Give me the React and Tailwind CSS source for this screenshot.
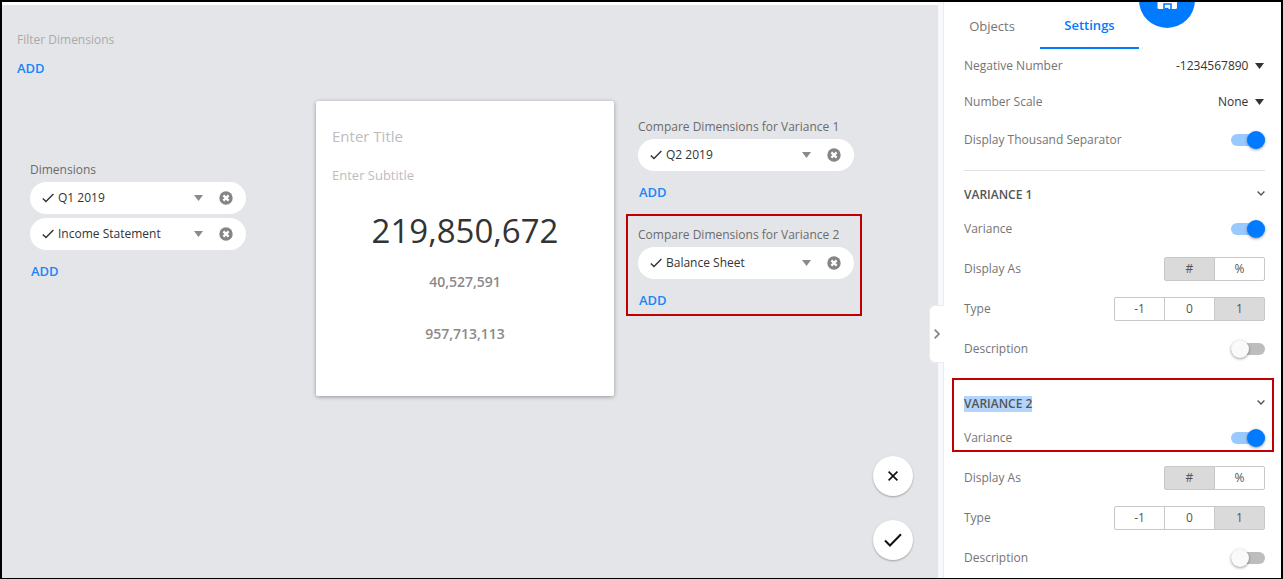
import { useState } from 'react';

const Triangle = ({ className }) => (
  <svg viewBox="0 0 10 6" preserveAspectRatio="none" className={className} fill="currentColor" aria-hidden="true">
    <path d="M0 0h10L5 6z" />
  </svg>
);

const Check = ({ className }) => (
  <svg viewBox="0 0 12 10" className={className} fill="none" stroke="currentColor" strokeWidth="1.4" aria-hidden="true">
    <path d="M.8 5.4 4 8.6 11.4 1" />
  </svg>
);

const Chevron = ({ className }) => (
  <svg viewBox="0 0 8 5" className={className} fill="none" stroke="currentColor" strokeWidth="1.4" aria-hidden="true">
    <path d="M.6.6 4 3.9 7.4.6" />
  </svg>
);

function Chip({ value }) {
  return (
    <div className="flex h-8 items-center rounded-full bg-white pr-[13px] pl-3 text-[#333]">
      <Check className="mr-1 h-[10px] w-3 shrink-0" />
      <div className="relative flex min-w-0 flex-1 items-center">
        <select aria-label={value} className="w-full appearance-none bg-transparent pr-4 outline-none">
          <option>{value}</option>
        </select>
        <Triangle className="pointer-events-none absolute right-0 h-[6px] w-[9px] text-[#8a8a8a]" />
      </div>
      <button type="button" aria-label={`Remove ${value}`} className="ml-4 shrink-0">
        <svg viewBox="0 0 14 14" className="size-[14px]" aria-hidden="true">
          <circle cx="7" cy="7" r="6.7" fill="#858585" />
          <path d="M4.4 4.4l5.2 5.2M9.6 4.4 4.4 9.6" stroke="#fff" strokeWidth="2.2" />
        </svg>
      </button>
    </div>
  );
}

function Dimensions({ label, values }) {
  return (
    <div className="w-[216px]">
      <div className="h-6 leading-6 text-[#6b6b6b]">{label}</div>
      <div className="flex flex-col gap-1">
        {values.map((v) => (
          <Chip key={v} value={v} />
        ))}
      </div>
      <button type="button" className="mt-[11px] block h-5 pl-px text-[13px] leading-5 font-semibold text-[#1a85f8]">
        ADD
      </button>
    </div>
  );
}

function SelectRow({ id, label, value }) {
  return (
    <div className="flex h-9 items-center justify-between">
      <label htmlFor={id}>{label}</label>
      <div className="flex items-center gap-[6px] pr-px text-[#333]">
        <select id={id} className="appearance-none bg-transparent outline-none">
          <option>{value}</option>
        </select>
        <Triangle className="h-[6px] w-[9px]" />
      </div>
    </div>
  );
}

function ToggleRow({ id, label, initial }) {
  const [on, setOn] = useState(initial);
  return (
    <div className="flex h-10 items-center justify-between">
      <label htmlFor={id}>{label}</label>
      <input
        id={id}
        type="checkbox"
        checked={on}
        onChange={() => setOn(!on)}
        className="flex h-3 w-[34px] appearance-none items-center rounded-full bg-[#bdbdbd] before:size-[18px] before:shrink-0 before:rounded-full before:bg-[#fafafa] before:shadow-[0_1px_3px_rgba(0,0,0,0.4)] checked:justify-end checked:bg-[#99caff] checked:before:bg-[#007bff]"
      />
    </div>
  );
}

function ButtonRow({ label, options, initial }) {
  const [picked, setPicked] = useState(initial);
  return (
    <div className="flex h-10 items-center justify-between">
      <span>{label}</span>
      <div role="group" aria-label={label} className="flex">
        {options.map((o) => (
          <button
            key={o}
            type="button"
            aria-pressed={o === picked}
            onClick={() => setPicked(o)}
            className="-ml-px h-6 w-[51px] border border-[#c8c8c8] text-[#555] first:rounded-l-xs last:rounded-r-xs aria-pressed:bg-[#dadada]"
          >
            {o}
          </button>
        ))}
      </div>
    </div>
  );
}

function Variance({ number, selected }) {
  return (
    <section>
      <div
        className={
          selected
            ? '-mt-3 -mr-[9px] -ml-3 h-[74px] border-2 border-[#c00000] pt-[10px] pr-[7px] pl-[10px]'
            : ''
        }
      >
        <div className="flex h-7 items-center justify-between text-[#555]">
          <h2 className={selected ? 'bg-[#b3d4fc] font-semibold leading-4' : 'font-semibold leading-4'}>
            VARIANCE {number}
          </h2>
          <Chevron className="mb-1 h-[5px] w-2" />
        </div>
        <ToggleRow id={`variance-${number}`} label="Variance" initial={true} />
      </div>
      <div className={selected ? 'mt-[6px]' : ''}>
        <ButtonRow label="Display As" options={['#', '%']} initial="#" />
        <ButtonRow label="Type" options={['-1', '0', '1']} initial="1" />
        <ToggleRow id={`description-${number}`} label="Description" initial={false} />
      </div>
    </section>
  );
}

export default function App() {
  return (
    <div className="relative flex min-h-screen overflow-hidden border-2 border-black bg-white font-['Open_Sans',sans-serif] text-[12px] leading-5">
      {/* Canvas */}
      <main className="mt-[3px] flex flex-1 flex-col bg-[#e4e5e9] pt-[25px] pb-[18px]">
        <div className="flex flex-col items-start gap-2 pl-[15px]">
          <span className="text-[#aaa]">Filter Dimensions</span>
          <button type="button" className="text-[13px] font-semibold text-[#1a85f8]">ADD</button>
        </div>

        <div className="mt-[23px] flex items-start pl-7">
          <div className="pt-[57px]">
            <Dimensions label="Dimensions" values={['Q1 2019', 'Income Statement']} />
          </div>

          <div className="ml-[70px] h-[295px] w-[298px] rounded-xs bg-white px-4 pt-[23px] text-center shadow-[0_1px_4px_rgba(0,0,0,0.35)]">
            <input aria-label="Title" placeholder="Enter Title" className="block h-6 w-full text-[15px] outline-none placeholder:text-[#bdbdbd]" />
            <input aria-label="Subtitle" placeholder="Enter Subtitle" className="mt-[17px] block h-5 w-full text-[13px] outline-none placeholder:text-[#bdbdbd]" />
            <div className="mt-6 text-[33px] leading-[44px] text-[#333]">219,850,672</div>
            <div className="mt-[19px] text-[14px] leading-5 font-semibold text-[#8a8a8a]">40,527,591</div>
            <div className="mt-8 text-[14px] leading-5 font-semibold text-[#8a8a8a]">957,713,113</div>
          </div>

          <div className="ml-3 flex flex-col gap-3 pt-[14px]">
            <div className="pl-3">
              <Dimensions label="Compare Dimensions for Variance 1" values={['Q2 2019']} />
            </div>
            <div className="border-2 border-[#c00000] pt-[7px] pr-[6px] pb-1 pl-[10px]">
              <Dimensions label="Compare Dimensions for Variance 2" values={['Balance Sheet']} />
            </div>
          </div>
        </div>

        <div className="mt-auto flex flex-col items-end gap-6 pr-[25px]">
          <button type="button" aria-label="Cancel" className="flex size-10 items-center justify-center rounded-full bg-white shadow-[0_1px_2px_rgba(0,0,0,0.3)]">
            <svg viewBox="0 0 10 10" className="size-[10px]" stroke="#111" strokeWidth="1.6" aria-hidden="true">
              <path d="M.6.6l8.8 8.8M9.4.6.6 9.4" />
            </svg>
          </button>
          <button type="button" aria-label="Apply" className="flex size-10 items-center justify-center rounded-full bg-white shadow-[0_1px_2px_rgba(0,0,0,0.3)]">
            <svg viewBox="0 0 18 14" className="h-[14px] w-[18px]" fill="none" stroke="#111" strokeWidth="2" aria-hidden="true">
              <path d="M1 7.5 6 12.5 17 1.2" />
            </svg>
          </button>
        </div>
      </main>

      {/* Panel handle */}
      <div className="relative w-[6px] shrink-0 border-r border-[#ececf0] bg-[#f9f9fb]">
        <button type="button" aria-label="Collapse panel" className="absolute top-[303px] -left-[9px] flex h-[58px] w-[15px] items-center justify-center rounded-l-md border border-r-0 border-[#ececf0] bg-white">
          <svg viewBox="0 0 6 10" className="h-[10px] w-[6px]" fill="none" stroke="#8a8a8a" strokeWidth="1.8" aria-hidden="true">
            <path d="M.7.7 5 5 .7 9.3" />
          </svg>
        </button>
      </div>

      {/* Settings panel */}
      <aside className="relative w-[337px] shrink-0 text-[#757575]">
        <div role="tablist" className="-mb-px flex h-[47px] text-[13px]">
          <button type="button" role="tab" className="w-24">Objects</button>
          <button type="button" role="tab" aria-selected="true" className="w-[99px] border-b-2 border-[#007bff] font-semibold text-[#007bff]">
            Settings
          </button>
        </div>
        <button type="button" aria-label="Save" className="absolute -top-[30px] left-[195px] flex size-14 items-center justify-center rounded-full bg-[#007bff]">
          <svg viewBox="0 0 20 20" className="size-5" aria-hidden="true">
            <path d="M1 0h14l5 5v12.5a1.5 1.5 0 0 1-1.5 1.5H2a1.5 1.5 0 0 1-1.5-1.5V0z" fill="#fff" />
            <path d="M7 19v-5h7v5" fill="none" stroke="#007bff" strokeWidth="1.6" />
            <path d="M8 18.6h3.5" stroke="#007bff" strokeWidth="1.6" />
          </svg>
        </button>

        <div className="pr-4 pl-5">
          <SelectRow id="negative" label="Negative Number" value="-1234567890" />
          <SelectRow id="scale" label="Number Scale" value="None" />
          <ToggleRow id="thousand" label="Display Thousand Separator" initial={true} />
          <hr className="my-[10px] border-[#e0e0e0]" />
          <Variance number={1} />
          <div className="h-[21px]" />
          <Variance number={2} selected />
        </div>
      </aside>
    </div>
  );
}
